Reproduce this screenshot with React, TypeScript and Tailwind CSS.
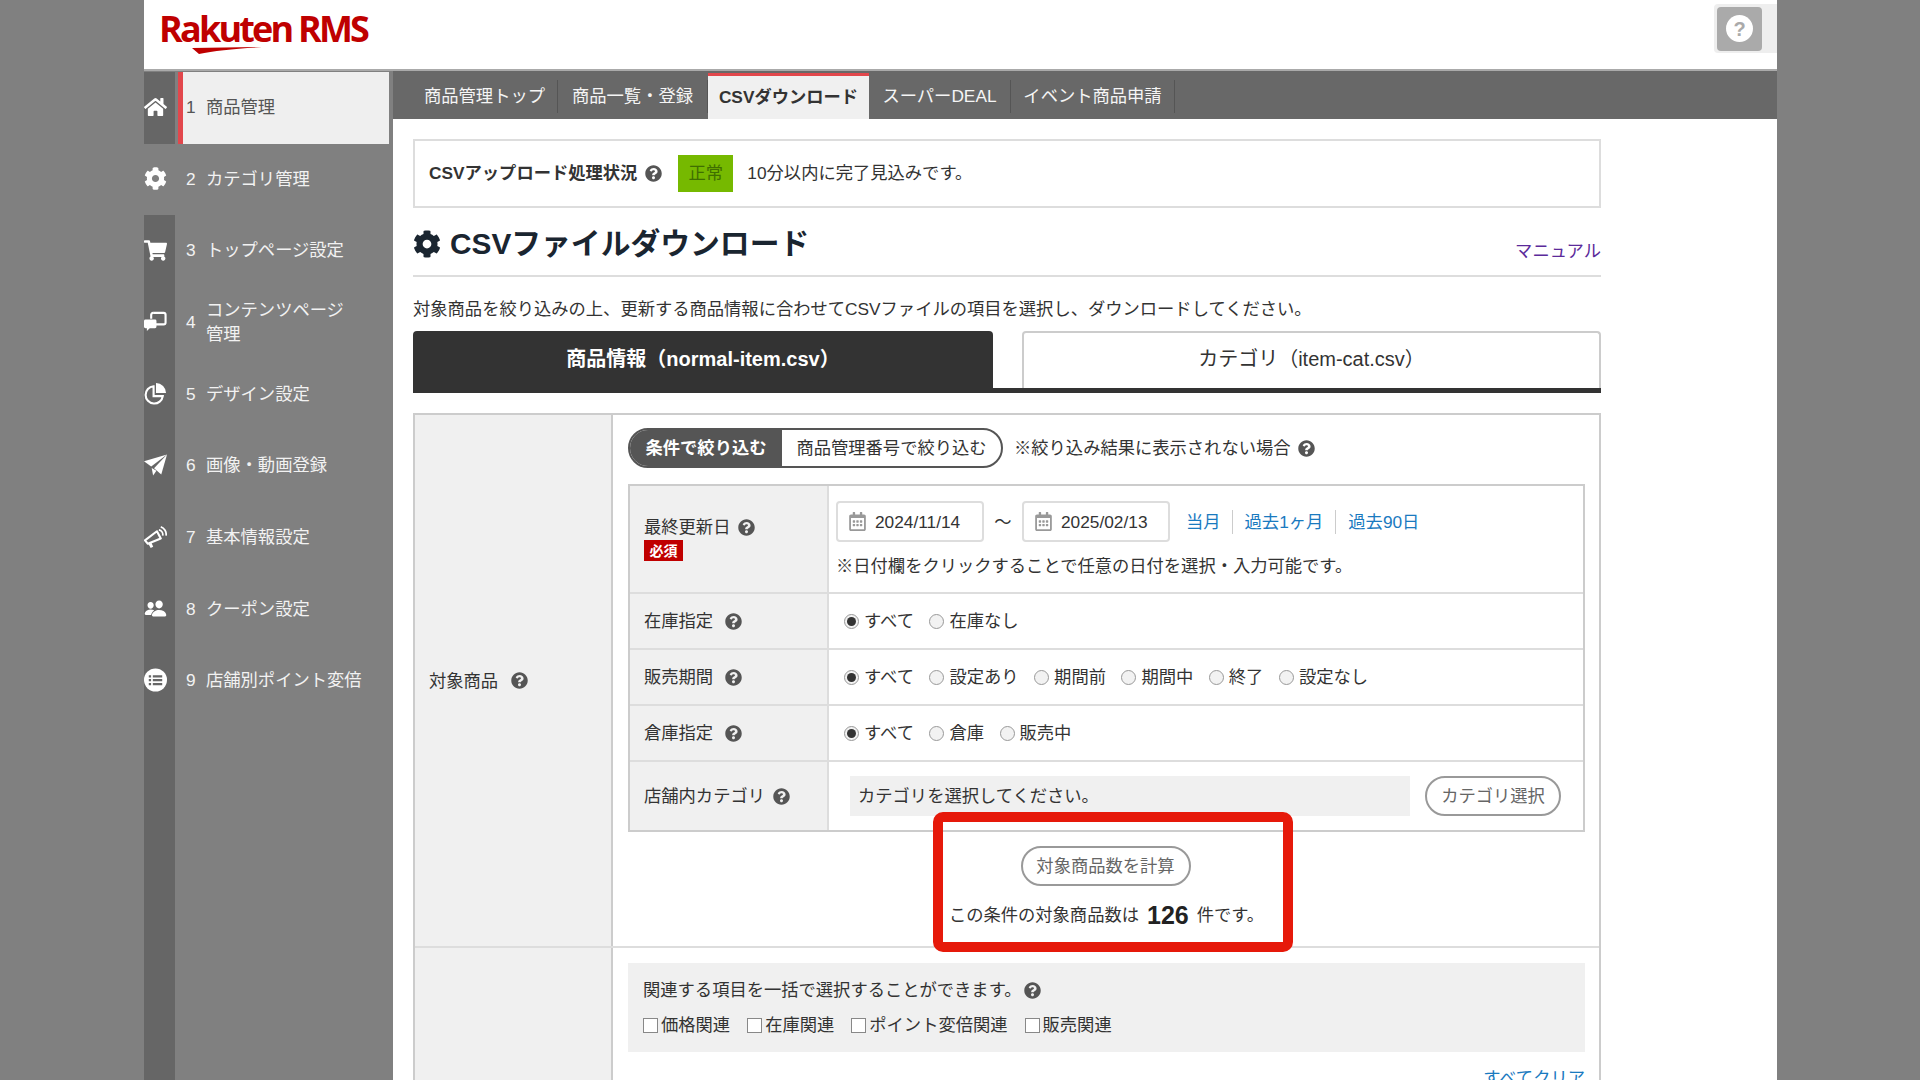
import type { ReactNode } from "react";
import { FaHome, FaCog, FaShoppingCart, FaQuestionCircle, FaRegCalendarAlt } from "react-icons/fa";
import { IoPeople } from "react-icons/io5";

function CommentsIcon() {
  return (
    <svg viewBox="0 0 24 22" className="h-[23px] w-[24px]">
      <path d="M9.5 2h11a2 2 0 0 1 2 2v8a2 2 0 0 1-2 2h-8" fill="none" stroke="white" strokeWidth="2.2" />
      <path d="M9.5 2a2 2 0 0 0-2 2v4" fill="none" stroke="white" strokeWidth="2.2" />
      <path d="M1.5 9h10a1.5 1.5 0 0 1 1.5 1.5v6a1.5 1.5 0 0 1-1.5 1.5H6l-3 3v-3H1.5A1.5 1.5 0 0 1 0 16.5v-6A1.5 1.5 0 0 1 1.5 9z" fill="white" />
    </svg>
  );
}

function PieIcon() {
  return (
    <svg viewBox="0 0 24 24" className="h-[23px] w-[23px]">
      <path d="M10 4.5a9 9 0 1 0 9.6 10.2H10z" fill="none" stroke="white" strokeWidth="2.2" />
      <path d="M12.5 1a10.5 10.5 0 0 1 10.5 10.5H12.5z" fill="white" />
    </svg>
  );
}

function PlaneIcon() {
  return (
    <svg viewBox="0 0 24 22" className="h-[22px] w-[24px] fill-white">
      <path d="M0 7 24 0 7.5 12.5z" />
      <path d="M24 0 18 21 10.5 14.5z" />
      <path d="M8 14 9.5 22 13 17z" />
    </svg>
  );
}

function HornIcon() {
  return (
    <svg viewBox="0 0 24 24" className="h-[24px] w-[24px]">
      <path d="M1 15.5 13.5 6l4 7.5L4 19z" fill="none" stroke="white" strokeWidth="2.2" strokeLinejoin="round" />
      <path d="M4.5 19l2.5 4.5 2.6-1.2-1.8-4.3" fill="white" />
      <path d="M15.5 4.5a5 5 0 0 1 4 6M17.5 1.5a8 8 0 0 1 5.5 9" fill="none" stroke="white" strokeWidth="1.8" />
    </svg>
  );
}

function ListIcon() {
  return (
    <svg viewBox="0 0 24 24" className="h-[24px] w-[24px]">
      <circle cx="12" cy="12" r="12" fill="white" />
      <path d="M5 7h2.4v2.4H5zM5 11h2.4v2.4H5zM5 15h2.4v2.4H5zM9.2 7H19v2.4H9.2zM9.2 11H19v2.4H9.2zM9.2 15H19v2.4H9.2z" fill="#666" />
    </svg>
  );
}

const NAV: Array<{ no: number; label: ReactNode; icon: ReactNode }> = [
  { no: 1, label: "商品管理", icon: <FaHome className="size-[24px] text-white" /> },
  { no: 2, label: "カテゴリ管理", icon: <FaCog className="size-[23px] text-white" /> },
  { no: 3, label: "トップページ設定", icon: <FaShoppingCart className="size-[23px] text-white" /> },
  { no: 4, label: <>コンテンツページ<br />管理</>, icon: <CommentsIcon /> },
  { no: 5, label: "デザイン設定", icon: <PieIcon /> },
  { no: 6, label: "画像・動画登録", icon: <PlaneIcon /> },
  { no: 7, label: "基本情報設定", icon: <HornIcon /> },
  { no: 8, label: "クーポン設定", icon: <IoPeople className="size-[25px] text-white" /> },
  { no: 9, label: "店舗別ポイント変倍", icon: <ListIcon /> },
];

const TABS = [
  { label: "商品管理トップ", w: "w-[146px]" },
  { label: "商品一覧・登録", w: "w-[150px]" },
  { label: "CSVダウンロード", w: "w-[161px]", active: true },
  { label: "スーパーDEAL", w: "w-[142px]" },
  { label: "イベント商品申請", w: "w-[164px]" },
];

function Help({ className = "" }: { className?: string }) {
  return <FaQuestionCircle className={`size-[17px] shrink-0 text-[#555] ${className}`} />;
}

function Radio({ label, checked = false }: { label: string; checked?: boolean }) {
  return (
    <label className="flex items-center gap-[5px]">
      <span className="flex size-[15px] items-center justify-center rounded-full border border-[#999] bg-[#f2f2f2]">
        {checked && <span className="size-[9px] rounded-full bg-[#333]" />}
      </span>
      {label}
    </label>
  );
}

function Check({ label }: { label: string }) {
  return (
    <label className="flex items-center gap-[3px]">
      <span className="size-[15px] border border-[#888] bg-white" />
      {label}
    </label>
  );
}

function DateBox({ value }: { value: string }) {
  return (
    <div className="flex h-[41px] w-[148px] items-center gap-[8px] rounded-[4px] border-2 border-[#ddd] pl-[10px]">
      <FaRegCalendarAlt className="size-[19px] text-[#999]" />
      <span>{value}</span>
    </div>
  );
}

function RadioRow({ title, items }: { title: string; items: string[] }) {
  return (
    <div className="flex h-[56px] border-b-2 border-[#ddd]">
      <div className="flex w-[199px] items-center gap-[12px] border-r-2 border-[#ddd] bg-[#f0f0f0] pl-[14px]">
        {title}
        <Help />
      </div>
      <div className="flex items-center gap-[15.5px] pl-[15px]">
        {items.map((it, i) => (
          <Radio key={it} label={it} checked={i === 0} />
        ))}
      </div>
    </div>
  );
}

export default function App() {
  return (
    <div
      className="relative flex h-[1080px] w-[1920px] overflow-hidden bg-[#808080] text-[17.3px] leading-[24px] text-[#333]"
      style={{ fontFamily: '"Liberation Sans", "Noto Sans CJK JP", sans-serif' }}
    >
      <div className="w-[144px] shrink-0" />

      <div className="flex w-[1633px] shrink-0 flex-col bg-white">
        <header className="flex h-[71px] shrink-0 items-start justify-between border-b-2 border-[#aaa]">
          <div className="relative ml-[15px] mt-[7px] h-[50px]">
            <span
              className="text-[36px] font-bold leading-[44px] tracking-[-2.8px] text-[#bf0000]"
              style={{ fontFamily: '"Open Sans", sans-serif' }}
            >
              Rakuten RMS
            </span>
            <svg viewBox="0 0 80 8" className="absolute left-[28px] top-[40px] h-[7px] w-[80px]">
              <path d="M0 1 L80 0 C50 2 25 4 8 8z" fill="#bf0000" />
            </svg>
          </div>
          <div className="mt-[4px] flex h-[49px] w-[63px] items-center rounded-l-[4px] bg-[#eee] pl-[3px]">
            <div className="flex h-[44px] w-[45px] items-center justify-center rounded-[4px] bg-[#aaa]">
              <span className="flex size-[27px] items-center justify-center rounded-full bg-white text-[20px] font-bold text-[#aaa]">?</span>
            </div>
          </div>
        </header>

        <div className="flex flex-1">
          <nav className="flex w-[249px] shrink-0 flex-col bg-[#808080] pt-px">
            {NAV.map((n) => {
              const active = n.no === 1;
              return (
                <div key={n.no} className="flex h-[71.7px] shrink-0">
                  <div className={n.no === 2 ? "flex w-[31px] items-center pb-[2px]" : "flex w-[31px] items-center bg-[#666] pb-[2px]"}>
                    <span className="flex w-[23px] justify-center">{n.icon}</span>
                  </div>
                  {active ? (
                    <div className="ml-[3px] flex w-[211px] items-center border-l-[5px] border-[#e2474c] bg-[#efefef] pb-[2px] pl-[3px] text-[#555]">
                      <span className="w-[20px]">{n.no}</span>
                      <span>{n.label}</span>
                    </div>
                  ) : (
                    <div className="flex items-center pb-[2px] pl-[11px] text-[#f2f2f2]">
                      <span className="w-[20px]">{n.no}</span>
                      <span>{n.label}</span>
                    </div>
                  )}
                </div>
              );
            })}
            <div className="w-[31px] flex-1 bg-[#666]" />
          </nav>

          <main className="flex-1">
            <div className="flex h-[48px] items-end bg-[#686868] pl-[19px]">
              {TABS.map((t) =>
                t.active ? (
                  <div
                    key={t.label}
                    className={`${t.w} flex h-[46px] items-center justify-center border-t-[3px] border-[#e2474c] bg-[#f0f0f0] pb-[2px] font-bold text-[#333]`}
                  >
                    {t.label}
                  </div>
                ) : (
                  <div key={t.label} className={`${t.w} mb-[6px] flex h-[33px] items-center justify-center border-r border-[#555] pb-[2px] text-[#f5f5f5]`}>
                    {t.label}
                  </div>
                ),
              )}
            </div>

            <div className="ml-[20px] w-[1188px]">
              <div className="mt-[20px] flex h-[69px] items-center border-2 border-[#ddd] pb-px pl-[14px]">
                <b className="font-bold">CSVアップロード処理状況</b>
                <Help className="ml-[8px]" />
                <span className="ml-[16px] flex h-[37px] w-[55px] items-center justify-center bg-[#76b900] text-[#3f6f00]">正常</span>
                <span className="ml-[14px]">10分以内に完了見込みです。</span>
              </div>

              <div className="flex h-[69px] items-start justify-between border-b-2 border-[#ddd]">
                <h1 className="mt-[18px] flex items-center gap-[9px] text-[29.8px] font-bold leading-[36px] text-[#1a2530]">
                  <FaCog className="size-[28px]" />
                  CSVファイルダウンロード
                </h1>
                <a className="mt-[31px] text-[#5b2a9a]">マニュアル</a>
              </div>

              <p className="mt-[20px]">対象商品を絞り込みの上、更新する商品情報に合わせてCSVファイルの項目を選択し、ダウンロードしてください。</p>

              <div className="mt-[10px] flex h-[62px] items-start">
                <div className="flex h-[62px] w-[580px] items-center justify-center rounded-t-[4px] bg-[#333] pb-[7px] text-[20px] font-bold text-white">
                  商品情報（normal-item.csv）
                </div>
                <div className="flex h-[62px] flex-1 flex-col justify-end">
                  <div className="ml-[29px] flex h-[57px] items-center justify-center rounded-t-[4px] border-x-2 border-t-2 border-[#ccc] pb-[3px] text-[20px]">
                    カテゴリ（item-cat.csv）
                  </div>
                  <div className="h-[5px] bg-[#333]" />
                </div>
              </div>

              <section className="mt-[20px] border-x-2 border-t-2 border-[#ccc]">
                <div className="flex h-[533px] border-b-2 border-[#ddd]">
                  <div className="flex w-[198px] shrink-0 items-center gap-[13px] border-r-2 border-[#ccc] bg-[#f0f0f0] pl-[14px]">
                    対象商品
                    <Help />
                  </div>
                  <div className="flex-1 pl-[15px] pr-[14px] pt-[13px]">
                    <div className="flex items-center">
                      <div className="flex h-[40px] w-[375px] overflow-hidden rounded-full border-2 border-[#555]">
                        <span className="flex w-[152px] items-center justify-center bg-[#555] font-bold text-white">条件で絞り込む</span>
                        <span className="flex flex-1 items-center justify-center">商品管理番号で絞り込む</span>
                      </div>
                      <span className="ml-[11px]">※絞り込み結果に表示されない場合</span>
                      <Help className="ml-[7px]" />
                    </div>

                    <div className="mt-[16px] border-2 border-[#ccc]">
                      <div className="flex h-[108px] border-b-2 border-[#ddd]">
                        <div className="w-[199px] border-r-2 border-[#ddd] bg-[#f0f0f0] pl-[14px] pt-[29px]">
                          <div className="flex items-center gap-[8px]">
                            最終更新日
                            <Help />
                          </div>
                          <span className="mt-px flex h-[21px] w-[39px] items-center justify-center bg-[#c00000] text-[14px] font-bold text-white">必須</span>
                        </div>
                        <div className="pl-[7px] pt-[15px]">
                          <div className="flex items-center">
                            <DateBox value="2024/11/14" />
                            <span className="w-[38px] text-center">～</span>
                            <DateBox value="2025/02/13" />
                            <div className="ml-[16px] flex items-center text-[#1a7abf]">
                              <a className="border-r border-[#ccc] pr-[11px]">当月</a>
                              <a className="border-r border-[#ccc] px-[12px]">過去1ヶ月</a>
                              <a className="pl-[12px]">過去90日</a>
                            </div>
                          </div>
                          <p className="mt-[12px]">※日付欄をクリックすることで任意の日付を選択・入力可能です。</p>
                        </div>
                      </div>

                      <RadioRow title="在庫指定" items={["すべて", "在庫なし"]} />
                      <RadioRow title="販売期間" items={["すべて", "設定あり", "期間前", "期間中", "終了", "設定なし"]} />
                      <RadioRow title="倉庫指定" items={["すべて", "倉庫", "販売中"]} />

                      <div className="flex h-[68px]">
                        <div className="flex w-[199px] items-center gap-[8px] border-r-2 border-[#ddd] bg-[#f0f0f0] pl-[14px]">
                          店舗内カテゴリ
                          <Help />
                        </div>
                        <div className="flex items-center pl-[21px]">
                          <div className="flex h-[40px] w-[560px] items-center bg-[#f0f0f0] pl-[8px]">カテゴリを選択してください。</div>
                          <button className="ml-[15px] h-[40px] w-[136px] rounded-full border-2 border-[#999] text-[#666]">カテゴリ選択</button>
                        </div>
                      </div>
                    </div>

                    <div className="mt-[14px] flex flex-col items-center">
                      <button className="mr-[2px] h-[40px] w-[170px] rounded-full border-2 border-[#999] text-[#666]">対象商品数を計算</button>
                      <p className="mt-[15px] flex h-[28px] items-center gap-[8px]">
                        この条件の対象商品数は
                        <b className="text-[25px] font-bold text-[#222]">126</b>
                        件です。
                      </p>
                    </div>
                  </div>
                </div>

                <div className="flex h-[200px]">
                  <div className="w-[198px] shrink-0 border-r-2 border-[#ccc] bg-[#f0f0f0]" />
                  <div className="flex-1 pl-[15px] pr-[14px] pt-[15px]">
                    <div className="h-[89px] bg-[#f0f0f0] pl-[15px] pt-[15px]">
                      <div className="flex items-center gap-[3px]">
                        関連する項目を一括で選択することができます。
                        <Help />
                      </div>
                      <div className="mt-[11px] flex items-center gap-[17px]">
                        <Check label="価格関連" />
                        <Check label="在庫関連" />
                        <Check label="ポイント変倍関連" />
                        <Check label="販売関連" />
                      </div>
                    </div>
                    <div className="mt-[14px] text-right text-[#1a7abf]">すべてクリア</div>
                  </div>
                </div>
              </section>
            </div>
          </main>
        </div>
      </div>

      <div className="absolute left-[933px] top-[812px] h-[140px] w-[360px] rounded-[10px] border-[10px] border-[#e6190a]" />
    </div>
  );
}
